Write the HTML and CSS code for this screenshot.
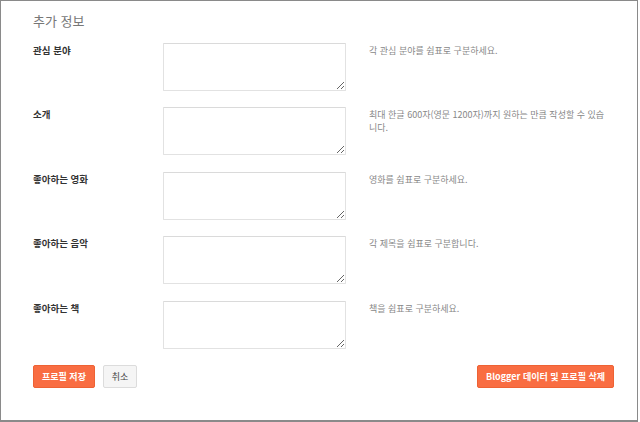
FILE: index.html
```html
<!DOCTYPE html>
<html lang="ko">
<head>
<meta charset="utf-8">
<link rel="stylesheet" href="styles.css">
</head>
<body>
<div class="frame">
  <h2 class="title">추가 정보</h2>
  <div class="rows">
    <div class="row">
      <div class="label">관심 분야</div>
      <textarea class="field"></textarea>
      <div class="help">각 관심 분야를 쉼표로 구분하세요.</div>
    </div>
    <div class="row">
      <div class="label">소개</div>
      <textarea class="field"></textarea>
      <div class="help">최대 한글 600자(영문 1200자)까지 원하는 만큼 작성할 수 있습니다.</div>
    </div>
    <div class="row">
      <div class="label">좋아하는 영화</div>
      <textarea class="field"></textarea>
      <div class="help">영화를 쉼표로 구분하세요.</div>
    </div>
    <div class="row">
      <div class="label">좋아하는 음악</div>
      <textarea class="field"></textarea>
      <div class="help">각 제목을 쉼표로 구분합니다.</div>
    </div>
    <div class="row">
      <div class="label">좋아하는 책</div>
      <textarea class="field"></textarea>
      <div class="help">책을 쉼표로 구분하세요.</div>
    </div>
  </div>
  <div class="actions">
    <div class="left">
      <button class="btn primary">프로필 저장</button>
      <button class="btn plain">취소</button>
    </div>
    <button class="btn primary">Blogger 데이터 및 프로필 삭제</button>
  </div>
</div>
</body>
</html>
```

FILE: styles.css
```css
html, body {
  margin: 0;
  padding: 0;
  background: #fff;
}
.frame {
  box-sizing: border-box;
  width: 638px;
  height: 422px;
  border: 1px solid #8a8a8a;
  border-bottom-width: 2px;
  padding: 0 23px 0 32px;
  font-family: "Noto Sans CJK KR", "Noto Sans", sans-serif;
}
.title {
  margin: 0;
  padding-top: 11px;
  height: 42px;
  box-sizing: border-box;
  font-size: 13px;
  line-height: 18px;
  font-weight: 400;
  color: #777;
}
.rows {
  display: flex;
  flex-direction: column;
  gap: 16.4px;
}
.row {
  display: grid;
  grid-template-columns: 130px 183px 1fr;
  column-gap: 0;
  align-items: start;
}
.label {
  font-size: 9.5px;
  line-height: 14px;
  font-weight: 700;
  color: #333;
}
.field {
  box-sizing: border-box;
  width: 183px;
  height: 48px;
  margin: 0;
  border: 1px solid #e2e2e2;
  border-top-color: #dadada;
  border-radius: 1px;
  resize: vertical;
  display: block;
}
.help {
  width: 238px;
  margin-left: 23px;
  font-size: 9px;
  line-height: 13px;
  color: #888;
  padding-top: 1px;
  word-break: break-all;
}
.actions {
  margin-top: 16px;
  display: flex;
  justify-content: space-between;
  align-items: center;
}
.left {
  display: flex;
  gap: 8px;
}
.btn {
  box-sizing: border-box;
  height: 23px;
  padding: 0 8px;
  font-family: "Noto Sans CJK KR", "Noto Sans", sans-serif;
  font-size: 9px;
  font-weight: 700;
  border-radius: 2px;
  cursor: pointer;
}
.primary {
  background: #f96d42;
  border: 1px solid #ee6234;
  color: #fff;
}
.plain {
  background: #f5f5f5;
  border: 1px solid #dcdcdc;
  color: #444;
  font-weight: 400;
  width: 34px;
  padding: 0;
}
```
